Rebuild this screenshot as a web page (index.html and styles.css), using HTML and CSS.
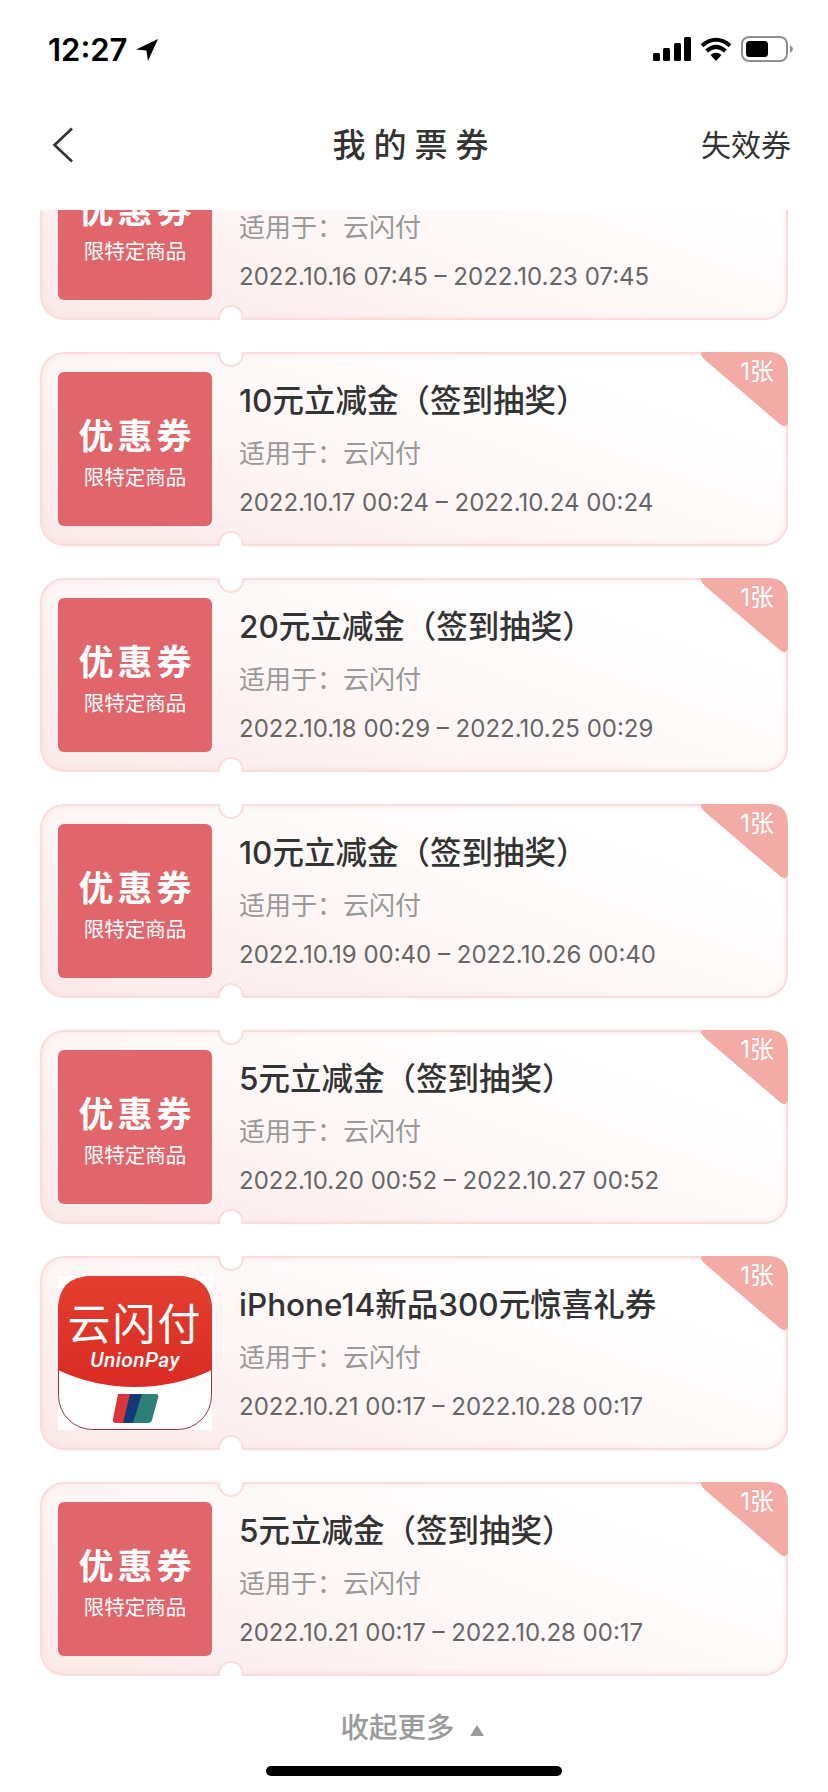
FILE: index.html
```html
<!DOCTYPE html>
<html lang="zh-CN">
<head>
    <meta charset="UTF-8">
    <meta name="viewport" content="width=device-width, initial-scale=1.0">
    <title>我的票券</title>
    <link rel="stylesheet" href="styles.css">
</head>
<body>
<div class="app">
    <div class="status-bar">
        <div class="status-time">
            <span>12:27</span>
            <svg class="status-arrow" width="22" height="22" viewBox="0 0 22 22"><path d="M22 0 L0 10.5 L10.4 11.4 L12 22 Z" fill="#000"/></svg>
        </div>
        <div class="status-icons">
            <svg width="38" height="24" viewBox="0 0 38 24"><rect x="0" y="16" width="7" height="8" rx="1.5"/><rect x="10" y="11" width="7" height="13" rx="1.5"/><rect x="21" y="6" width="7" height="18" rx="1.5"/><rect x="31" y="0" width="7" height="24" rx="1.5"/></svg>
            <svg width="32" height="24" viewBox="0 0 32 24"><path d="M16 24 L10.5 18 Q16 13.5 21.5 18 Z"/><path d="M6.6 14 Q16 5.8 25.4 14" fill="none" stroke="#000" stroke-width="4"/><path d="M2 8.6 Q16 -3 30 8.6" fill="none" stroke="#000" stroke-width="4"/></svg>
            <svg width="53" height="26" viewBox="0 0 53 26"><rect x="1" y="1" width="45" height="24" rx="7" fill="none" stroke="#8e8e8e" stroke-width="2"/><rect x="5" y="5" width="22" height="16" rx="3.5"/><path d="M49 9 Q52 11 52 13 Q52 15 49 17 Z" fill="#8e8e8e"/></svg>
        </div>
    </div>

    <header class="nav">
        <svg class="nav-back" width="22" height="36" viewBox="0 0 22 36"><path d="M20 1.5 L2.5 18 L20 34.5" fill="none" stroke="#333" stroke-width="2.6"/></svg>
        <h1 class="nav-title">我的票券</h1>
        <a class="nav-link">失效券</a>
    </header>

    <main class="list">
        <div class="ticket">
            <div class="thumb"><span class="thumb-main">优惠券</span><span class="thumb-sub">限特定商品</span></div>
            <div class="info">
                <div class="title">5元立减金（签到抽奖）</div>
                <div class="scope">适用于：云闪付</div>
                <div class="date">2022.10.16 07:45 – 2022.10.23 07:45</div>
            </div>
            <svg class="corner" width="88" height="75" viewBox="0 0 88 75"><path d="M2 0 H68 Q88 0 88 20 V70 Q87 76 81 73 L5 8 Q-1 2 2 0 Z"/></svg>
            <span class="count">1张</span>
        </div>
        <div class="ticket">
            <div class="thumb"><span class="thumb-main">优惠券</span><span class="thumb-sub">限特定商品</span></div>
            <div class="info">
                <div class="title">10元立减金（签到抽奖）</div>
                <div class="scope">适用于：云闪付</div>
                <div class="date">2022.10.17 00:24 – 2022.10.24 00:24</div>
            </div>
            <svg class="corner" width="88" height="75" viewBox="0 0 88 75"><path d="M2 0 H68 Q88 0 88 20 V70 Q87 76 81 73 L5 8 Q-1 2 2 0 Z"/></svg>
            <span class="count">1张</span>
        </div>
        <div class="ticket">
            <div class="thumb"><span class="thumb-main">优惠券</span><span class="thumb-sub">限特定商品</span></div>
            <div class="info">
                <div class="title">20元立减金（签到抽奖）</div>
                <div class="scope">适用于：云闪付</div>
                <div class="date">2022.10.18 00:29 – 2022.10.25 00:29</div>
            </div>
            <svg class="corner" width="88" height="75" viewBox="0 0 88 75"><path d="M2 0 H68 Q88 0 88 20 V70 Q87 76 81 73 L5 8 Q-1 2 2 0 Z"/></svg>
            <span class="count">1张</span>
        </div>
        <div class="ticket">
            <div class="thumb"><span class="thumb-main">优惠券</span><span class="thumb-sub">限特定商品</span></div>
            <div class="info">
                <div class="title">10元立减金（签到抽奖）</div>
                <div class="scope">适用于：云闪付</div>
                <div class="date">2022.10.19 00:40 – 2022.10.26 00:40</div>
            </div>
            <svg class="corner" width="88" height="75" viewBox="0 0 88 75"><path d="M2 0 H68 Q88 0 88 20 V70 Q87 76 81 73 L5 8 Q-1 2 2 0 Z"/></svg>
            <span class="count">1张</span>
        </div>
        <div class="ticket">
            <div class="thumb"><span class="thumb-main">优惠券</span><span class="thumb-sub">限特定商品</span></div>
            <div class="info">
                <div class="title">5元立减金（签到抽奖）</div>
                <div class="scope">适用于：云闪付</div>
                <div class="date">2022.10.20 00:52 – 2022.10.27 00:52</div>
            </div>
            <svg class="corner" width="88" height="75" viewBox="0 0 88 75"><path d="M2 0 H68 Q88 0 88 20 V70 Q87 76 81 73 L5 8 Q-1 2 2 0 Z"/></svg>
            <span class="count">1张</span>
        </div>
        <div class="ticket">
            <div class="thumb thumb-app">
                <svg width="154" height="154" viewBox="0 0 154 154">
                    <defs>
                        <linearGradient id="appRed" x1="0" y1="0" x2="0" y2="1">
                            <stop offset="0" stop-color="#e23f2e"/>
                            <stop offset="1" stop-color="#d92b25"/>
                        </linearGradient>
                    </defs>
                    <rect width="154" height="154" fill="#fff"/>
                    <rect x="0.5" y="0.5" width="153" height="153" rx="34" fill="#fff" stroke="#9c3038"/>
                    <path d="M0 94 V34 Q0 0 34 0 H120 Q154 0 154 34 V94 Q118 111 77 111 Q36 111 0 94 Z" fill="url(#appRed)"/>
                    <text class="app-name" x="77" y="64" text-anchor="middle">云闪付</text>
                    <text class="app-latin" x="77" y="91" text-anchor="middle">UnionPay</text>
                    <path d="M60 118 L72 118 L82 118 L73 147 L58 147 Q54 147 55 143 Z" fill="#d8363a"/>
                    <path d="M72 118 H88 L79 147 H65 Z" fill="#123a78"/>
                    <path d="M84 118 H98 Q101 118 100 122 L94 144 Q93 147 90 147 H75 Z" fill="#2d7f77"/>
                </svg>
            </div>
            <div class="info">
                <div class="title">iPhone14新品300元惊喜礼券</div>
                <div class="scope">适用于：云闪付</div>
                <div class="date">2022.10.21 00:17 – 2022.10.28 00:17</div>
            </div>
            <svg class="corner" width="88" height="75" viewBox="0 0 88 75"><path d="M2 0 H68 Q88 0 88 20 V70 Q87 76 81 73 L5 8 Q-1 2 2 0 Z"/></svg>
            <span class="count">1张</span>
        </div>
        <div class="ticket">
            <div class="thumb"><span class="thumb-main">优惠券</span><span class="thumb-sub">限特定商品</span></div>
            <div class="info">
                <div class="title">5元立减金（签到抽奖）</div>
                <div class="scope">适用于：云闪付</div>
                <div class="date">2022.10.21 00:17 – 2022.10.28 00:17</div>
            </div>
            <svg class="corner" width="88" height="75" viewBox="0 0 88 75"><path d="M2 0 H68 Q88 0 88 20 V70 Q87 76 81 73 L5 8 Q-1 2 2 0 Z"/></svg>
            <span class="count">1张</span>
        </div>
    </main>

    <footer class="more">
        <span class="more-text">收起更多</span>
        <span class="more-arrow"></span>
    </footer>
    <div class="home-bar"></div>
</div>
</body>
</html>
```

FILE: styles.css
```css
* {
    box-sizing: border-box;
}
body {
    margin: 0;
    background-color: #fff;
    font-family: Inter, "Noto Sans CJK SC", sans-serif;
    color: #333;
}
.app {
    width: 828px;
    height: 1792px;
    overflow: hidden;
    display: flex;
    flex-direction: column;
}
.status-bar {
    height: 100px;
    padding: 36px 34px 0 48px;
    display: flex;
    justify-content: space-between;
    align-items: flex-start;
}
.status-time {
    display: flex;
    align-items: center;
    gap: 9px;
    font-family: Inter, sans-serif;
    font-size: 31px;
    line-height: 28px;
    font-weight: 600;
    color: #000;
}
.status-arrow {
    margin-top: 0;
}
.status-icons {
    display: flex;
    align-items: center;
    gap: 9px;
    height: 26px;
}
.nav {
    height: 86px;
    margin-bottom: 24px;
    padding: 0 37px 0 52px;
    display: flex;
    align-items: center;
    justify-content: space-between;
}
.nav-back {
    width: 22px;
    margin-top: 4px;
}
.nav-title {
    margin: 0 0 0 54px;
    font-size: 33px;
    font-weight: 500;
    letter-spacing: 8px;
    color: #333;
}
.nav-link {
    font-size: 30px;
    color: #333;
}
.list {
    height: 1472px;
    overflow: hidden;
    padding: 0 40px;
    display: flex;
    flex-direction: column;
    gap: 32px;
    flex: none;
}
.ticket {
    position: relative;
    flex: none;
    height: 194px;
    padding: 18px 14px 18px 16px;
    display: flex;
    align-items: center;
    border: 2px solid #fadcdc;
    border-radius: 24px;
    background: linear-gradient(20deg, #fbe9e9 0%, #fef7f7 45%, #fff 80%);
    box-shadow: inset 0 0 6px rgba(250, 215, 215, 0.6);
}
.ticket:first-child {
    margin-top: -84px;
}
.ticket:before,
.ticket:after {
    content: "";
    position: absolute;
    left: 176px;
    width: 22px;
    height: 22px;
    border-radius: 50%;
    background-color: #fff;
    border: 2px solid #fadcdc;
}
.ticket:before {
    top: -13px;
    clip-path: inset(11px 0 0 0);
}
.ticket:after {
    bottom: -13px;
    clip-path: inset(0 0 11px 0);
}
.thumb {
    flex: none;
    width: 154px;
    height: 154px;
    padding-top: 10px;
    border-radius: 6px;
    background-color: #e0666b;
    color: #fff;
    display: flex;
    flex-direction: column;
    align-items: center;
    justify-content: center;
}
.thumb-main {
    font-size: 35px;
    line-height: 40px;
    font-weight: 700;
    letter-spacing: 4px;
    margin-right: -4px;
}
.thumb-sub {
    font-size: 20.5px;
    line-height: 30px;
    margin-top: 7px;
}
.thumb-app {
    padding-top: 0;
    background: none;
    border-radius: 0;
}
.app-name {
    font-size: 43px;
    font-weight: 400;
    fill: #fff;
    letter-spacing: 2px;
}
.app-latin {
    font-family: Roboto, sans-serif;
    font-size: 21px;
    font-style: italic;
    font-weight: 500;
    letter-spacing: 0.4px;
    fill: #fff;
}
.info {
    margin-left: 27px;
    padding-top: 5px;
    display: flex;
    flex-direction: column;
}
.title {
    font-size: 31.5px;
    line-height: 40px;
    font-weight: 500;
    color: #333;
}
.scope {
    margin-top: 13px;
    font-size: 26px;
    line-height: 40px;
    color: #999;
}
.date {
    margin-top: 9px;
    font-size: 24px;
    line-height: 40px;
    color: #666;
}
.corner {
    position: absolute;
    top: -2px;
    right: -2px;
    fill: #f3aba6;
}
.count {
    position: absolute;
    top: 3px;
    right: 12px;
    font-size: 24px;
    line-height: 30px;
    color: #fff;
}
.more {
    flex: none;
    display: flex;
    align-items: center;
    justify-content: center;
    gap: 15px;
    height: 36px;
    margin-top: 28px;
    padding-right: 4px;
}
.more-text {
    font-size: 28.5px;
    line-height: 36px;
    font-weight: 500;
    color: #9b9b9b;
}
.more-arrow {
    width: 0;
    height: 0;
    margin-top: 4px;
    border-left: 7px solid transparent;
    border-right: 7px solid transparent;
    border-bottom: 11px solid #9b9b9b;
}
.home-bar {
    flex: none;
    width: 296px;
    height: 10px;
    margin: 20px auto 0 266px;
    border-radius: 5px;
    background-color: #000;
}
```
